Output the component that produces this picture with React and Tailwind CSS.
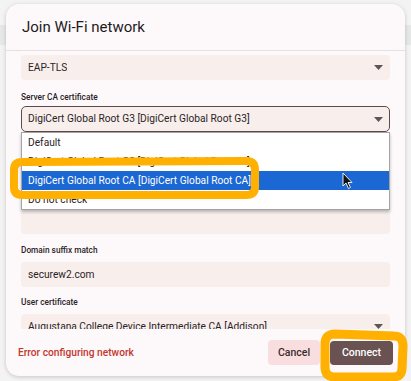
import React from "react";

const font = { fontFamily: "Roboto, 'Noto Sans', Arial, sans-serif" };

function Caret() {
  return (
    <svg width="9" height="5" viewBox="0 0 9 5" className="shrink-0">
      <path d="M0 0 L9 0 L4.5 5 Z" fill="#5c5657" />
    </svg>
  );
}

function Field({ children, caret, className = "" }) {
  return (
    <div className={`flex items-center justify-between h-[25px] rounded-[4px] bg-[#f8efed] pl-[7px] pr-[7px] text-[10.2px] text-[#2a2325] ${className}`}>
      <span className="truncate">{children}</span>
      {caret && <Caret />}
    </div>
  );
}

function Label({ children, className = "" }) {
  return <div className={`h-[12px] leading-[12px] text-[8.3px] font-medium text-[#2a2325] ${className}`}>{children}</div>;
}

export default function App() {
  return (
    <div className="relative w-[411px] h-[381px] overflow-hidden bg-[#f3f3f3] pt-[4px] px-[6px]" style={font}>
      <div className="absolute left-0 right-0 top-[25px] h-[20px] bg-[#e6e8e8]" />

      <div className="relative flex flex-col w-[399px] h-[372px] rounded-[13px] bg-[#fdf9fb] shadow-[0_1px_4px_rgba(0,0,0,0.18)]">
        <div className="h-[47px] flex items-center pl-[16px] text-[15px] text-[#1f1a1c] border-b border-[#e6e0e2]">
          Join Wi-Fi network
        </div>

        <div className="flex-1 overflow-hidden px-[15px] pt-[4px]">
          <Field caret>EAP-TLS</Field>
          <Label className="mt-[11px] mb-[3px]">Server CA certificate</Label>
          <div className="flex items-center justify-between h-[26px] rounded-[5px] border-[1.5px] border-[#5e4b4c] bg-[#f8efed] pl-[6px] pr-[6px] text-[10.2px] text-[#2a2325]">
            <span className="truncate">DigiCert Global Root G3 [DigiCert Global Root G3]</span>
            <Caret />
          </div>
          <div className="h-[77px]" />
          <Field />
          <Label className="mt-[10px] mb-[6px]">Domain suffix match</Label>
          <Field>securew2.com</Field>
          <Label className="mt-[9px] mb-[6px]">User certificate</Label>
          <Field caret>Augustana College Device Intermediate CA [Addison]</Field>
        </div>

        <div className="h-[47px] shrink-0 flex items-center justify-between pl-[12px] pr-[12px]">
          <span className="text-[10.2px] font-medium text-[#c3372d]">Error configuring network</span>
          <div className="flex items-center gap-[10px]">
            <button className="h-[25px] w-[52px] rounded-[4px] bg-[#f9dedf] text-[10.5px] font-medium text-[#3a2b2c]">Cancel</button>
            <button className="h-[24px] w-[63px] rounded-[4px] bg-[#6a5152] text-[10.5px] font-medium text-white">Connect</button>
          </div>
        </div>

        {/* open dropdown list */}
        <div className="absolute left-[15px] top-[128px] w-[369px] h-[78px] bg-white border border-[#a4a4a4] shadow-[0_2px_3px_rgba(0,0,0,0.25)] text-[10.2px] text-[#2a2325]">
          <div className="h-[19px] flex items-center pl-[6px]">Default</div>
          <div className="h-[19px] flex items-center pl-[6px]">DigiCert Global Root G2 [DigiCert Global Root G2]</div>
          <div className="h-[19px] flex items-center pl-[6px] bg-[#1b67d3] text-white">DigiCert Global Root CA [DigiCert Global Root CA]</div>
          <div className="h-[19px] flex items-center pl-[6px]">Do not check</div>
        </div>
      </div>

      {/* highlighter marks */}
      <svg className="absolute inset-0 pointer-events-none" width="411" height="381" viewBox="0 0 411 381">
        <path
          d="M22 162 L246 161 Q255 161 255 170 L255 187 Q255 195 246 195 L22 195 Q14 195 14 187 L14 170 Q14 162 22 162 Z"
          fill="none" stroke="#ffb000" strokeWidth="8" strokeLinejoin="round"
        />
        <path
          d="M335 334 L394 336 Q403 336 403 346 L402 368 Q402 377 393 377 L335 377 Q325 377 325 367 L325 344 Q325 334 335 334 Z"
          fill="none" stroke="#ffb000" strokeWidth="9" strokeLinejoin="round"
        />
        <path
          d="M343 173 L343 186 L346 183 L348.5 188.5 L350.5 187.5 L348 182.5 L352 182.5 Z"
          fill="#111" stroke="#fff" strokeWidth="0.9" strokeLinejoin="round"
        />
      </svg>
    </div>
  );
}
